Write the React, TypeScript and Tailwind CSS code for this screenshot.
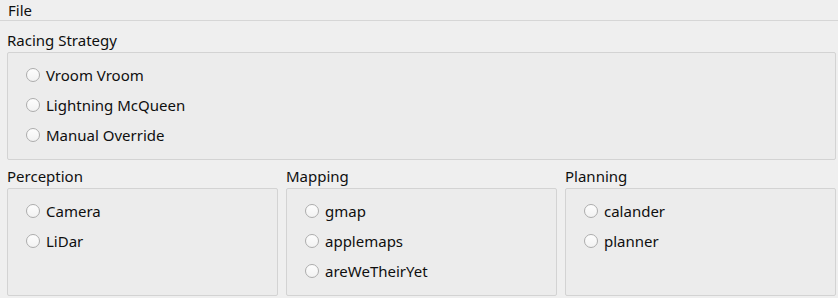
import React from "react";

type Group = { title: string; options: string[] };

const Radio = ({ label }: { label: string }) => (
    <div className="flex items-center h-4 gap-[6px]">
        <span className="w-[14px] h-[14px] rounded-full border border-[#adadad] bg-gradient-to-b from-[#fdfdfd] to-[#f2f2f2]" />
        <span className="leading-4">{label}</span>
    </div>
);

const GroupBox = ({ group }: { group: Group }) => (
    <div className="flex flex-col">
        <div className="h-[17px] leading-[17px] mb-[3px]">{group.title}</div>
        <div className="h-[108px] border border-[#d3d3d3] rounded-[2px] bg-[#ececec] pl-[18px] pt-[14px] flex flex-col gap-[14px]">
            {group.options.map((o) => (
                <Radio key={o} label={o} />
            ))}
        </div>
    </div>
);

export default function App() {
    const strategy: Group = { title: "Racing Strategy", options: ["Vroom Vroom", "Lightning McQueen", "Manual Override"] };
    const bottom: Group[] = [
        { title: "Perception", options: ["Camera", "LiDar"] },
        { title: "Mapping", options: ["gmap", "applemaps", "areWeTheirYet"] },
        { title: "Planning", options: ["calander", "planner"] },
    ];

    return (
        <div className="w-[838px] h-[298px] bg-[#efefef] text-[#0f0f0f] text-[15px] font-['Noto_Sans',sans-serif] overflow-hidden">
            {/* Menu bar */}
            <div className="h-[21px] border-b border-[#d6d6d6] px-[8px] flex items-center">
                <span className="leading-4">File</span>
            </div>

            <div className="pl-[7px] pr-[2px] pt-[11px] flex flex-col gap-[8px]">
                <GroupBox group={strategy} />
                <div className="grid grid-cols-3 gap-[8px]">
                    {bottom.map((g) => (
                        <GroupBox key={g.title} group={g} />
                    ))}
                </div>
            </div>
        </div>
    );
}
